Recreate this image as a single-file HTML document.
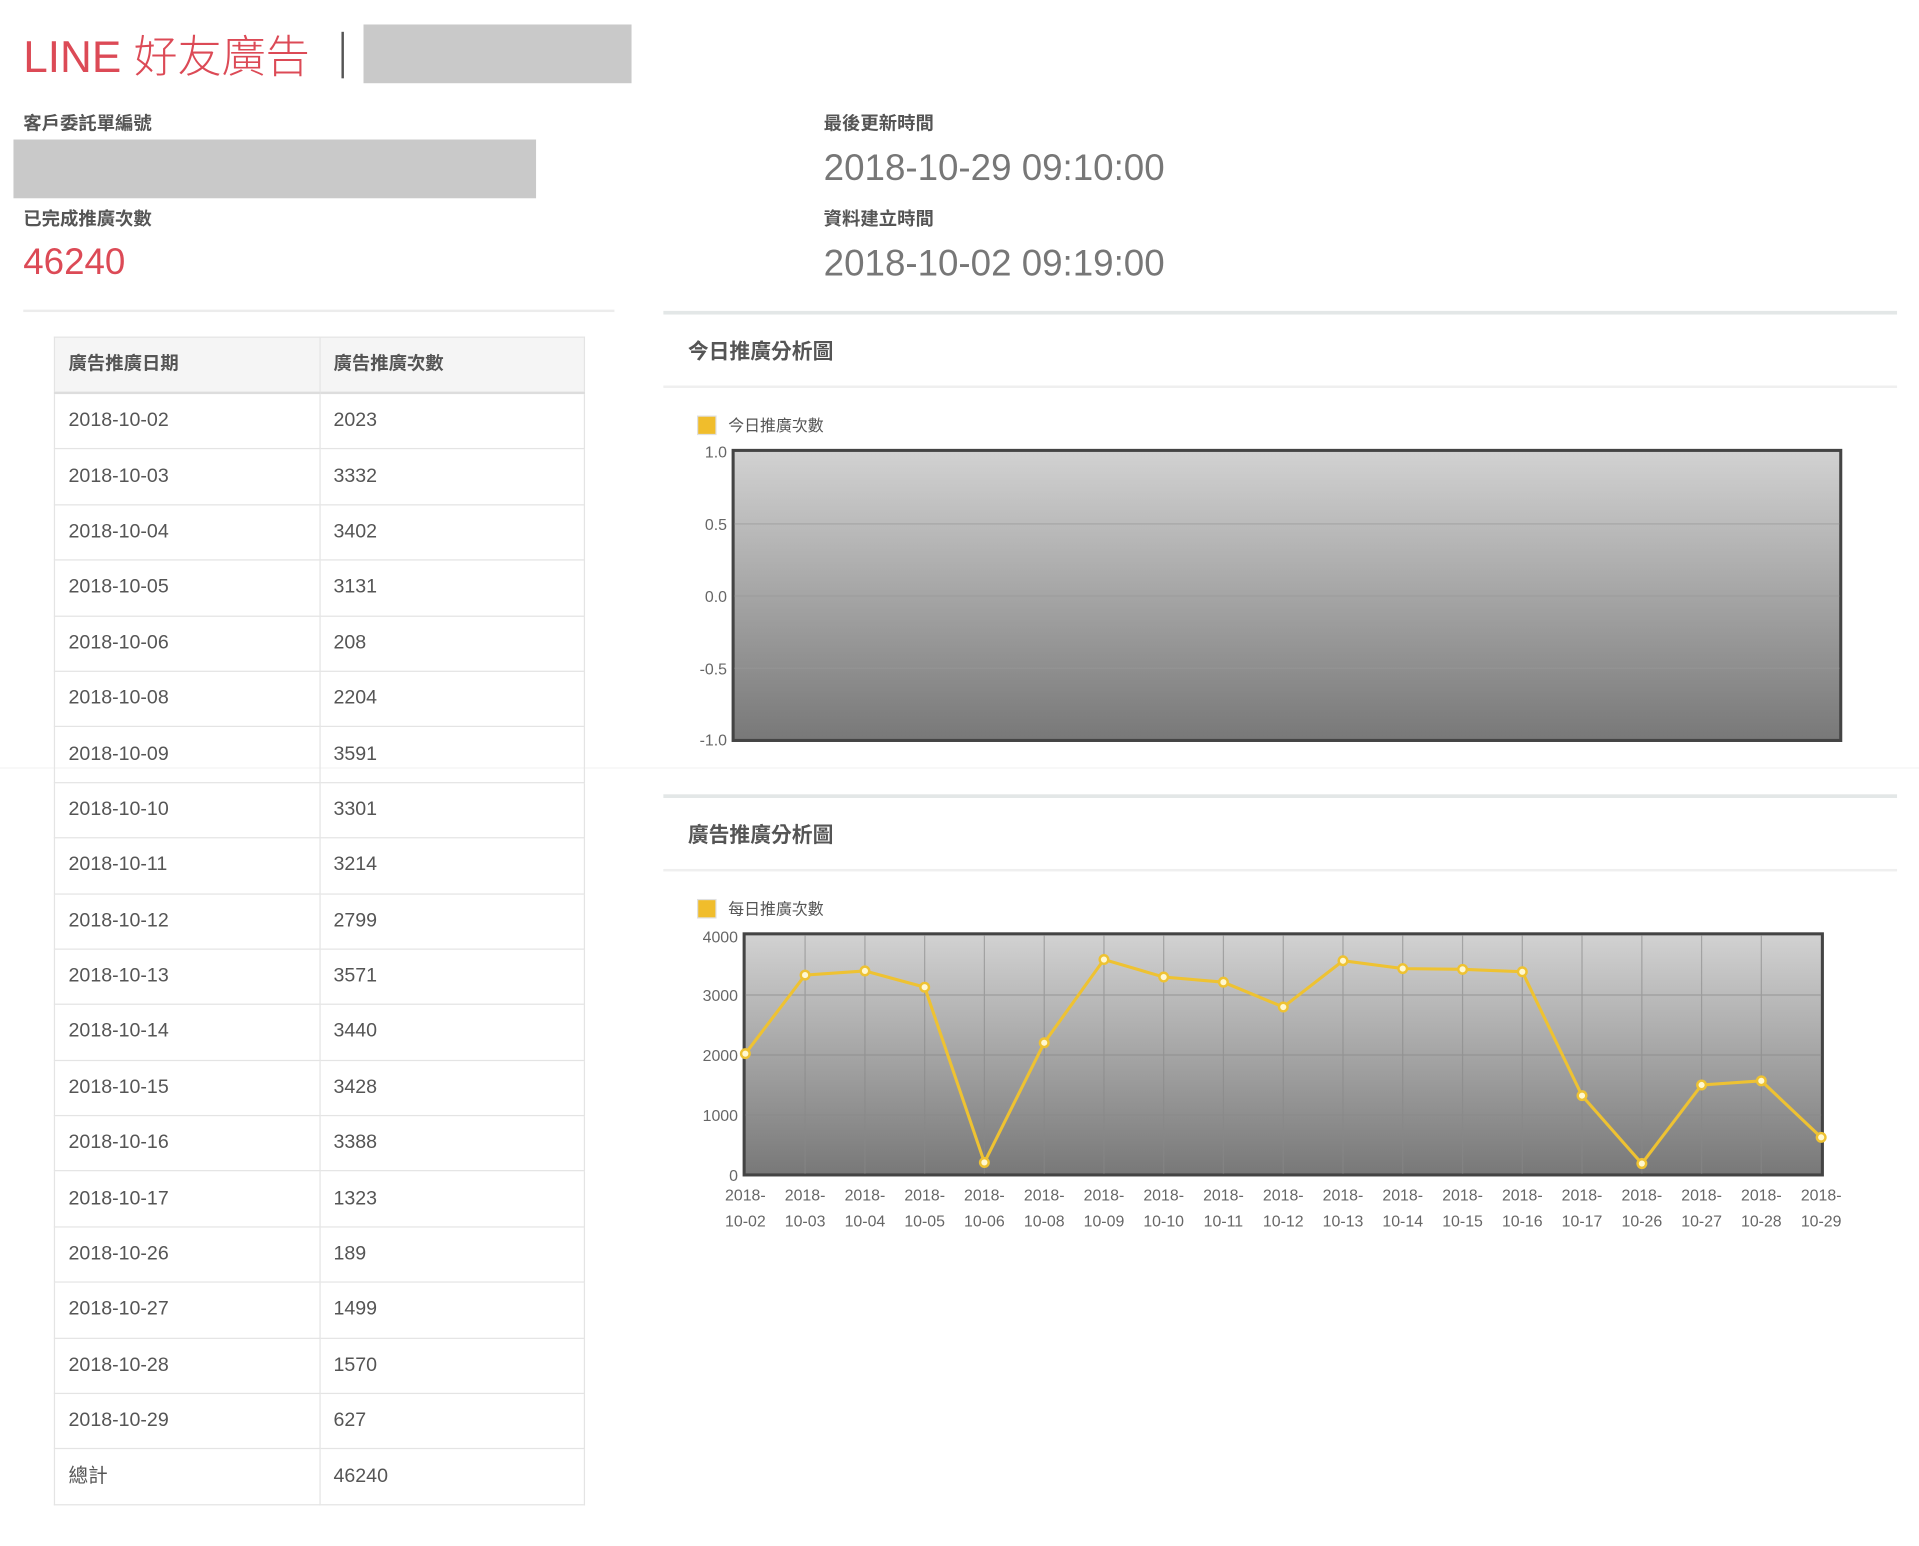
<!DOCTYPE html>
<html><head><meta charset="utf-8"><style>
html,body{margin:0;padding:0;background:#fff;width:1919px;height:1546px;overflow:hidden}
#w{position:absolute;left:0;top:0;width:1568px;height:1263px;transform:scale(1.2239);transform-origin:0 0;font-family:"Liberation Sans","Noto Sans CJK TC",sans-serif;color:#555}
.a{position:absolute;white-space:nowrap}
.lbl{font-size:15px;font-weight:bold;color:#555}
.big{font-size:30px;color:#777;font-weight:300}
table{position:absolute;left:44px;top:275px;width:434px;border-collapse:collapse;font-size:16px;color:#555}
td,th{border:1px solid #e4e4e4;height:44.4px;padding:0 0 0 11px;text-align:left;width:50%;vertical-align:middle;line-height:20px}
th{background:#f5f5f5;font-weight:bold;font-size:15px;height:44px;border-bottom:2px solid #ddd}
</style></head><body><div id="w">
<div class="a" style="left:19px;top:18px;font-size:36px;color:#dc4a56;font-weight:300">LINE 好友廣告</div>
<div class="a" style="left:279px;top:26px;width:1.5px;height:38px;background:#555"></div>
<div class="a" style="left:297px;top:20px;width:219px;height:48px;background:#c9c9c9"></div>
<div class="a lbl" style="left:19px;top:90px">客戶委託單編號</div>
<div class="a" style="left:11px;top:114px;width:427px;height:48px;background:#c9c9c9"></div>
<div class="a lbl" style="left:19px;top:168px">已完成推廣次數</div>
<div class="a" style="left:19px;top:198px;font-size:30px;color:#dc4a56">46240</div>
<div class="a lbl" style="left:673px;top:90px">最後更新時間</div>
<div class="a big" style="left:673px;top:121px">2018-10-29 09:10:00</div>
<div class="a lbl" style="left:673px;top:168px">資料建立時間</div>
<div class="a big" style="left:673px;top:199px">2018-10-02 09:19:00</div>
<div class="a" style="left:19px;top:253px;width:483px;height:2px;background:#ececec"></div>
<div class="a" style="left:542px;top:254px;width:1008px;height:3px;background:#e3e7e7"></div>
<div class="a" style="left:0;top:627px;width:1568px;height:1px;background:#f4f4f4"></div>
<table>
<tr><th>廣告推廣日期</th><th>廣告推廣次數</th></tr>
<tr><td>2018-10-02</td><td>2023</td></tr>
<tr><td>2018-10-03</td><td>3332</td></tr>
<tr><td>2018-10-04</td><td>3402</td></tr>
<tr><td>2018-10-05</td><td>3131</td></tr>
<tr><td>2018-10-06</td><td>208</td></tr>
<tr><td>2018-10-08</td><td>2204</td></tr>
<tr><td>2018-10-09</td><td>3591</td></tr>
<tr><td>2018-10-10</td><td>3301</td></tr>
<tr><td>2018-10-11</td><td>3214</td></tr>
<tr><td>2018-10-12</td><td>2799</td></tr>
<tr><td>2018-10-13</td><td>3571</td></tr>
<tr><td>2018-10-14</td><td>3440</td></tr>
<tr><td>2018-10-15</td><td>3428</td></tr>
<tr><td>2018-10-16</td><td>3388</td></tr>
<tr><td>2018-10-17</td><td>1323</td></tr>
<tr><td>2018-10-26</td><td>189</td></tr>
<tr><td>2018-10-27</td><td>1499</td></tr>
<tr><td>2018-10-28</td><td>1570</td></tr>
<tr><td>2018-10-29</td><td>627</td></tr>
<tr><td>總計</td><td>46240</td></tr>
</table>
<svg class="a" style="left:0;top:0" width="1568" height="1263" font-family="Liberation Sans, Noto Sans CJK TC, sans-serif">
<defs><linearGradient id="g" x1="0" y1="0" x2="0" y2="1"><stop offset="0" stop-color="#d2d2d2"/><stop offset="1" stop-color="#787878"/></linearGradient></defs>
<text x="562" y="293" font-size="17" font-weight="bold" fill="#555">今日推廣分析圖</text>
<rect x="542" y="315" width="1008" height="2" fill="#efefef"/>
<rect x="570" y="340" width="15" height="15" fill="#f0bd2c" stroke="#e0e0e0"/>
<text x="595" y="352" font-size="13" fill="#555">今日推廣次數</text>
<rect x="599" y="368" width="905" height="237" fill="url(#g)" stroke="#444" stroke-width="2.5"/>
<g stroke="#999" stroke-width="1" opacity=".6"><line x1="600" x2="1503" y1="428" y2="428"/><line x1="600" x2="1503" y1="487" y2="487"/><line x1="600" x2="1503" y1="546" y2="546"/></g>
<g font-size="13" fill="#666" text-anchor="end"><text x="594" y="374">1.0</text><text x="594" y="433">0.5</text><text x="594" y="492">0.0</text><text x="594" y="551">-0.5</text><text x="594" y="609">-1.0</text></g>
<rect x="542" y="649" width="1008" height="3" fill="#e3e7e7"/>
<text x="562" y="688" font-size="17" font-weight="bold" fill="#555">廣告推廣分析圖</text>
<rect x="542" y="710" width="1008" height="2" fill="#efefef"/>
<rect x="570" y="735" width="15" height="15" fill="#f0bd2c" stroke="#e0e0e0"/>
<text x="595" y="747" font-size="13" fill="#555">每日推廣次數</text>
<rect x="608" y="763" width="881" height="197" fill="url(#g)" stroke="#444" stroke-width="2.5"/>
<g stroke="#888" stroke-width="1" opacity=".6">
<line x1="609" x2="1488" y1="813" y2="813"/><line x1="609" x2="1488" y1="862" y2="862"/><line x1="609" x2="1488" y1="911" y2="911"/>
<line x1="657.8" x2="657.8" y1="764" y2="959"/><line x1="706.7" x2="706.7" y1="764" y2="959"/><line x1="755.5" x2="755.5" y1="764" y2="959"/><line x1="804.3" x2="804.3" y1="764" y2="959"/><line x1="853.2" x2="853.2" y1="764" y2="959"/><line x1="902" x2="902" y1="764" y2="959"/><line x1="950.8" x2="950.8" y1="764" y2="959"/><line x1="999.6" x2="999.6" y1="764" y2="959"/><line x1="1048.5" x2="1048.5" y1="764" y2="959"/><line x1="1097.3" x2="1097.3" y1="764" y2="959"/><line x1="1146.1" x2="1146.1" y1="764" y2="959"/><line x1="1195" x2="1195" y1="764" y2="959"/><line x1="1243.8" x2="1243.8" y1="764" y2="959"/><line x1="1292.6" x2="1292.6" y1="764" y2="959"/><line x1="1341.5" x2="1341.5" y1="764" y2="959"/><line x1="1390.3" x2="1390.3" y1="764" y2="959"/><line x1="1439.1" x2="1439.1" y1="764" y2="959"/>
</g>
<g font-size="13" fill="#666" text-anchor="end"><text x="603" y="770">4000</text><text x="603" y="818">3000</text><text x="603" y="867">2000</text><text x="603" y="916">1000</text><text x="603" y="965">0</text></g>
<polyline fill="none" stroke="#eec232" stroke-width="2.5" points="609,860.9 657.8,796.7 706.7,793.3 755.5,806.6 804.3,949.8 853.2,852 902,784 950.8,798.3 999.6,802.5 1048.5,822.8 1097.3,785 1146.1,791.4 1195,792 1243.8,794 1292.6,895.2 1341.5,950.7 1390.3,886.5 1439.1,883.1 1488,929.3"/>
<g fill="#fff8d0" stroke="#eec232" stroke-width="2">
<circle cx="609" cy="860.9" r="3.5"/><circle cx="657.8" cy="796.7" r="3.5"/><circle cx="706.7" cy="793.3" r="3.5"/><circle cx="755.5" cy="806.6" r="3.5"/><circle cx="804.3" cy="949.8" r="3.5"/><circle cx="853.2" cy="852" r="3.5"/><circle cx="902" cy="784" r="3.5"/><circle cx="950.8" cy="798.3" r="3.5"/><circle cx="999.6" cy="802.5" r="3.5"/><circle cx="1048.5" cy="822.8" r="3.5"/><circle cx="1097.3" cy="785" r="3.5"/><circle cx="1146.1" cy="791.4" r="3.5"/><circle cx="1195" cy="792" r="3.5"/><circle cx="1243.8" cy="794" r="3.5"/><circle cx="1292.6" cy="895.2" r="3.5"/><circle cx="1341.5" cy="950.7" r="3.5"/><circle cx="1390.3" cy="886.5" r="3.5"/><circle cx="1439.1" cy="883.1" r="3.5"/><circle cx="1488" cy="929.3" r="3.5"/>
</g>
<g font-size="13" fill="#666" text-anchor="middle">
<text x="609" y="981">2018-</text><text x="609" y="1002">10-02</text>
<text x="657.8" y="981">2018-</text><text x="657.8" y="1002">10-03</text>
<text x="706.7" y="981">2018-</text><text x="706.7" y="1002">10-04</text>
<text x="755.5" y="981">2018-</text><text x="755.5" y="1002">10-05</text>
<text x="804.3" y="981">2018-</text><text x="804.3" y="1002">10-06</text>
<text x="853.2" y="981">2018-</text><text x="853.2" y="1002">10-08</text>
<text x="902" y="981">2018-</text><text x="902" y="1002">10-09</text>
<text x="950.8" y="981">2018-</text><text x="950.8" y="1002">10-10</text>
<text x="999.6" y="981">2018-</text><text x="999.6" y="1002">10-11</text>
<text x="1048.5" y="981">2018-</text><text x="1048.5" y="1002">10-12</text>
<text x="1097.3" y="981">2018-</text><text x="1097.3" y="1002">10-13</text>
<text x="1146.1" y="981">2018-</text><text x="1146.1" y="1002">10-14</text>
<text x="1195" y="981">2018-</text><text x="1195" y="1002">10-15</text>
<text x="1243.8" y="981">2018-</text><text x="1243.8" y="1002">10-16</text>
<text x="1292.6" y="981">2018-</text><text x="1292.6" y="1002">10-17</text>
<text x="1341.5" y="981">2018-</text><text x="1341.5" y="1002">10-26</text>
<text x="1390.3" y="981">2018-</text><text x="1390.3" y="1002">10-27</text>
<text x="1439.1" y="981">2018-</text><text x="1439.1" y="1002">10-28</text>
<text x="1488" y="981">2018-</text><text x="1488" y="1002">10-29</text>
</g>
</svg>
</div></body></html>
